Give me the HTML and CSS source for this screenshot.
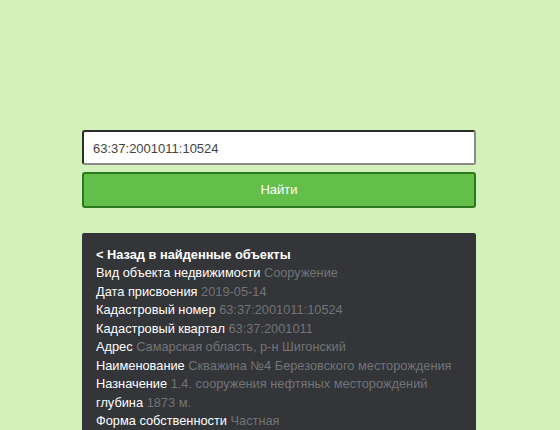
FILE: index.html
```html
<!DOCTYPE html>
<html lang="ru">
<head>
<meta charset="utf-8">
<title>Поиск по кадастровому номеру</title>
<link rel="stylesheet" href="styles.css">
</head>
<body>
<main class="search">
  <form class="search-form">
    <input class="search-input" type="text" value="63:37:2001011:10524">
    <button class="search-btn" type="button">Найти</button>
  </form>
  <section class="result">
    <a class="back" href="#">&lt; Назад в найденные объекты</a>
    <div class="row"><span class="label">Вид объекта недвижимости</span> <span class="value">Сооружение</span></div>
    <div class="row"><span class="label">Дата присвоения</span> <span class="value">2019-05-14</span></div>
    <div class="row"><span class="label">Кадастровый номер</span> <span class="value">63:37:2001011:10524</span></div>
    <div class="row"><span class="label">Кадастровый квартал</span> <span class="value">63:37:2001011</span></div>
    <div class="row"><span class="label">Адрес</span> <span class="value">Самарская область, р-н Шигонский</span></div>
    <div class="row"><span class="label">Наименование</span> <span class="value">Скважина №4 Березовского месторождения</span></div>
    <div class="row"><span class="label">Назначение</span> <span class="value">1.4. сооружения нефтяных месторождений</span></div>
    <div class="row"><span class="label">глубина</span> <span class="value">1873 м.</span></div>
    <div class="row"><span class="label">Форма собственности</span> <span class="value">Частная</span></div>
  </section>
</main>
</body>
</html>
```
FILE: styles.css
```css
html, body {
  margin: 0;
  padding: 0;
  height: 100%;
  overflow: hidden;
}

body {
  background: #d3f1bb;
  font-family: "Liberation Sans", Arial, sans-serif;
  font-size: 12.8px;
  line-height: 18.45px;
}

.search {
  width: 394px;
  margin: 0 84px 0 82px;
  padding-top: 130px;
  display: flex;
  flex-direction: column;
}

.search-form {
  display: flex;
  flex-direction: column;
  gap: 7px;
  margin: 0;
}

.search-input {
  box-sizing: border-box;
  height: 35px;
  width: 100%;
  padding: 2px 9px 0;
  border: 2px solid #2b2b2b;
  border-right-color: #8a8a8a;
  border-bottom-color: #8a8a8a;
  border-radius: 3px;
  background: #fff;
  color: #444;
  font: inherit;
  font-size: 13px;
  outline: none;
}

.search-btn {
  box-sizing: border-box;
  height: 36px;
  width: 100%;
  padding-top: 2px;
  border: 2px solid #2a7a1c;
  border-radius: 3px;
  background: #64be4a;
  color: #fff;
  font: inherit;
  font-size: 13px;
  cursor: pointer;
}

.result {
  margin-top: 25px;
  background: #333539;
  border-radius: 2px;
  padding: 13px 14px;
  color: #fff;
}

.back {
  display: block;
  color: #fff;
  font-weight: bold;
  text-decoration: none;
}

.label {
  color: #fff;
}

.value {
  color: #727477;
}
```
